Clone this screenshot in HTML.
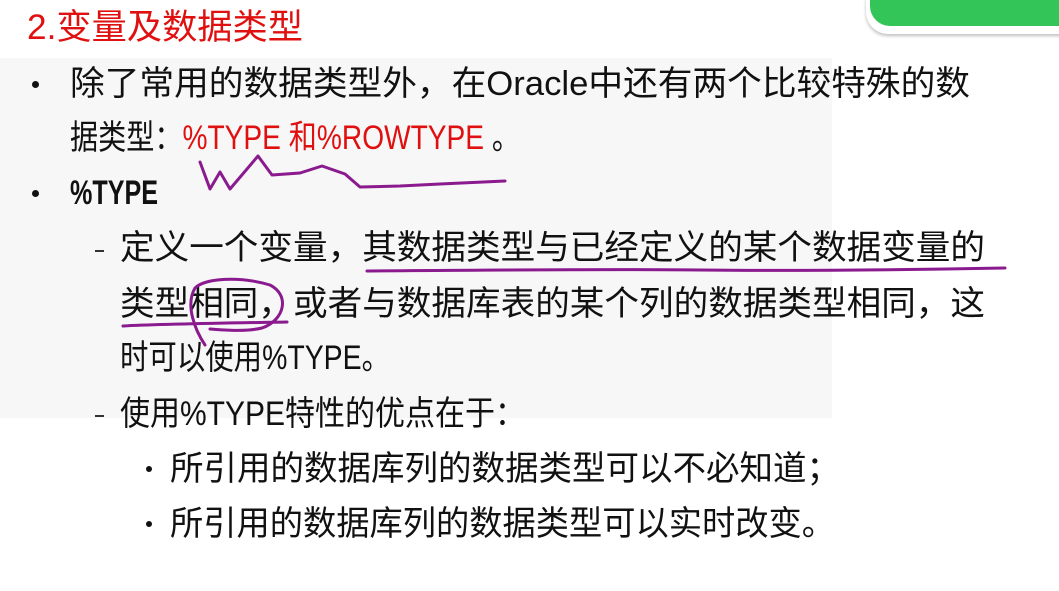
<!DOCTYPE html>
<html><head><meta charset="utf-8"><style>
html,body{margin:0;padding:0;}
body{width:1059px;height:591px;position:relative;overflow:hidden;background:#fff;font-family:"Liberation Sans","Noto Sans CJK SC",sans-serif;}
.bg{position:absolute;left:0;top:58px;width:832px;height:360px;background:#f7f7f7;}
.l{position:absolute;white-space:nowrap;line-height:1;font-size:34px;color:#111;}
.l span{display:inline-block;transform-origin:0 50%;}
.dot{position:absolute;width:7px;height:7px;border-radius:50%;background:#111;}
.dash{position:absolute;width:9px;height:2px;background:#333;}
.red{color:#e01010;}
</style></head><body>
<div class="bg"></div>
<div style="position:absolute;left:866px;top:-20px;width:220px;height:54px;border-radius:22px;background:#fff;box-shadow:0 2px 3px rgba(0,0,0,0.25);"></div>
<div style="position:absolute;left:870px;top:-20px;width:220px;height:46px;border-radius:20px;background:#34c559;"></div>

<div class="l red" data-w="276" style="left:27px;top:10px;font-size:35px;"><span>2.变量及数据类型</span></div>

<div class="dot" style="left:32px;top:81px;"></div>
<div class="l" data-w="900" style="left:70px;top:67px;"><span>除了常用的数据类型外，在Oracle中还有两个比较特殊的数</span></div>
<div class="l" data-w="450" style="left:70px;top:121px;"><span>据类型：<b class="red" style="font-weight:normal">%TYPE 和%ROWTYPE</b> 。</span></div>

<div class="dot" style="left:32px;top:190px;"></div>
<div class="l" data-w="88" style="left:70px;top:176px;font-weight:bold;"><span>%TYPE</span></div>

<div class="dash" style="left:95px;top:250px;"></div>
<div class="l" data-w="865" style="left:120px;top:231px;"><span>定义一个变量，其数据类型与已经定义的某个数据变量的</span></div>
<div class="l" data-w="865" style="left:120px;top:287px;"><span>类型相同，或者与数据库表的某个列的数据类型相同，这</span></div>
<div class="l" data-w="270" style="left:120px;top:341px;"><span>时可以使用%TYPE。</span></div>

<div class="dash" style="left:95px;top:415px;"></div>
<div class="l" data-w="405" style="left:120px;top:397px;"><span>使用%TYPE特性的优点在于：</span></div>

<div class="dot" style="left:146px;top:466px;width:6px;height:6px;"></div>
<div class="l" data-w="670" style="left:170px;top:452px;"><span>所引用的数据库列的数据类型可以不必知道；</span></div>
<div class="dot" style="left:146px;top:521px;width:6px;height:6px;"></div>
<div class="l" data-w="665" style="left:170px;top:507px;"><span>所引用的数据库列的数据类型可以实时改变。</span></div>

<svg style="position:absolute;left:0;top:0" width="1059" height="591">
<g fill="none" stroke="#8a1a8e" stroke-width="3" stroke-linecap="round" stroke-linejoin="round">
<path d="M200 162 L210 189 L220 172 L230 189 L258 156 L272 175 L300 173 L322 166 L345 174 L360 187 L400 186 L440 184 L505 181"/>
<path d="M367 271 C500 270 600 269 700 270 C800 271 900 270 1005 268"/>
<path d="M123 326 C160 324 230 323 287 322"/>
<path d="M205 345 C195 330 185 305 195 288 C205 278 240 276 270 285 C290 295 285 320 262 328 C245 332 225 330 210 329"/>
</g>
</svg>
<script>
document.querySelectorAll('.l').forEach(function(d){
 var s=d.querySelector('span');var w=s.getBoundingClientRect().width;var t=+d.dataset.w;
 if(w>0)s.style.transform='scaleX('+(t/w)+')';
});
</script>
</body></html>
